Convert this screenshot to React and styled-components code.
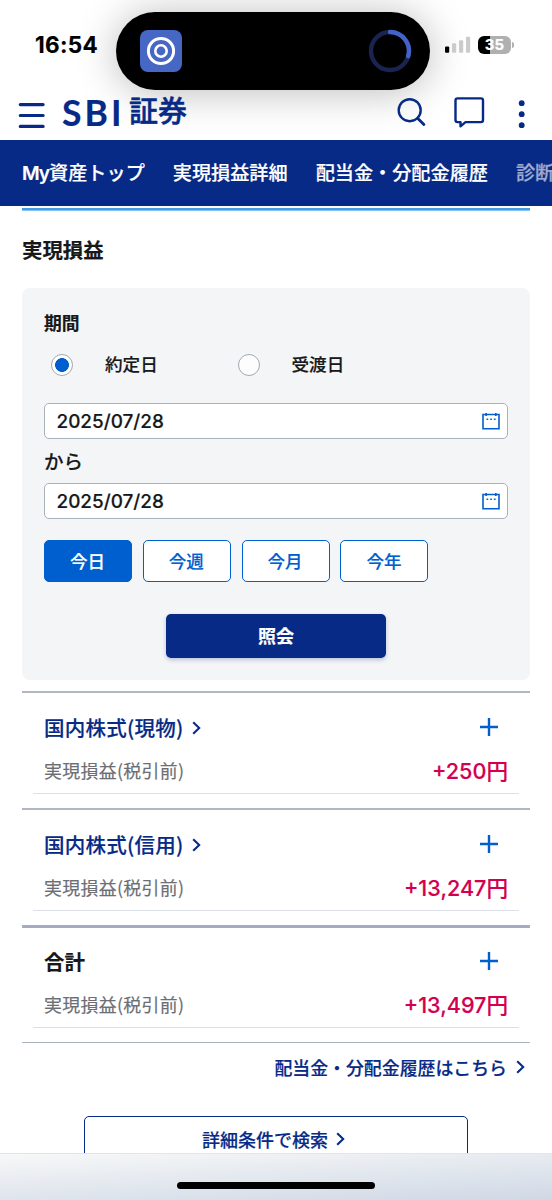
import React, { useState } from "react"
import styled, { createGlobalStyle } from "styled-components"

const GlobalStyle = createGlobalStyle`
  * {
    box-sizing: border-box;
  }
  body {
    margin: 0;
    background: #fff;
    color: #17181a;
    font-family: Inter, "Noto Sans CJK JP", sans-serif;
    -webkit-text-stroke: 0.18px;
  }
  button {
    font-family: inherit;
    padding: 0;
    cursor: pointer;
  }
`

const navy = "#072a86"
const blue = "#005fce"

const Screen = styled.div`
  position: relative;
  width: 552px;
  height: 1200px;
  overflow: hidden;
  background: #fff;
`

const StatusBar = styled.div`
  display: flex;
  align-items: flex-start;
  height: 92px;
  padding-top: 12px;
`

const Clock = styled.div`
  width: 116px;
  padding-left: 35px;
  font-size: 22.5px;
  font-weight: 700;
  letter-spacing: 0.3px;
  line-height: 66px;
  color: #000;
`

const Island = styled.div`
  display: flex;
  align-items: center;
  justify-content: space-between;
  width: 314px;
  height: 78px;
  padding: 0 18px 0 23.5px;
  border-radius: 39px;
  background: #000;
  box-shadow: 0 2px 40px rgba(0, 0, 0, 0.27);
`

const Signal = styled.svg`
  margin: 24px 0 0 15px;
`

const Battery = styled.div`
  position: relative;
  width: 33px;
  height: 18px;
  margin: 24px 0 0 7px;
  border-radius: 6px;
  background: linear-gradient(90deg, #000 36%, #b0b0b0 36%);
  color: #fff;
  font-size: 15px;
  font-weight: 700;
  line-height: 18px;
  text-align: center;

  &::after {
    content: "";
    position: absolute;
    top: 6px;
    right: -3px;
    width: 2px;
    height: 6px;
    border-radius: 0 2px 2px 0;
    background: #b0b0b0;
  }
`

const Header = styled.header`
  display: flex;
  align-items: center;
  height: 48px;
  padding: 0 26px 4px 18px;
`

const MenuIcon = styled.svg`
  margin-top: 3px;
`

const Logo = styled.div`
  display: flex;
  align-items: center;
  flex: 1;
  margin: -4px 0 0 16px;
  color: ${navy};
  line-height: 44px;
`

const LogoLatin = styled.span`
  width: 67px;
  font-family: Lato, sans-serif;
  font-size: 37px;
  font-weight: 700;
  letter-spacing: 3.2px;
  transform: scaleX(0.96);
  transform-origin: left;
  white-space: nowrap;
`

const LogoKanji = styled.span`
  font-size: 29px;
  font-weight: 500;
  -webkit-text-stroke: 0.5px;
`

const HeaderIcons = styled.div`
  display: flex;
  align-items: center;
`

const Nav = styled.nav`
  display: flex;
  align-items: center;
  gap: 28px;
  height: 66px;
  padding: 0 0 2px 22px;
  overflow: hidden;
  background: ${navy};
`

const NavItem = styled.a`
  flex: none;
  color: #fff;
  opacity: ${(props) => (props.$faded ? 0.6 : 1)};
  font-size: 19.15px;
  font-weight: 500;
  white-space: nowrap;

  b {
    font-weight: 600;
    letter-spacing: -1px;
  }
`

const Main = styled.main`
  padding: 2px 22px 0;
`

const TopLine = styled.div`
  height: 3px;
  background: linear-gradient(#4b9be0 66%, #7fc4f4 66%);
`

const Title = styled.h1`
  margin: 0;
  height: 77px;
  font-size: 20.4px;
  font-weight: 700;
  line-height: 80px;
`

const Panel = styled.section`
  height: 392px;
  padding: 22px;
  border-radius: 8px;
  background: #f4f5f7;
`

const Label = styled.div`
  height: 28px;
  font-size: 17.8px;
  font-weight: 700;
  line-height: 28px;
`

const RadioRow = styled.div`
  display: flex;
  height: 65px;
  padding: 0 0 11px 7px;
`

const RadioLabel = styled.label`
  display: flex;
  align-items: center;
  gap: 32px;
  width: 186.5px;
  font-size: 17.6px;
  font-weight: 500;

  span {
    margin-top: -3px;
  }
`

const Radio = styled.input`
  appearance: none;
  width: 22px;
  height: 22px;
  margin: 0;
  border: 1px solid #a3a8b4;
  border-radius: 50%;
  background: #fdfdfd;

  &:checked {
    background: radial-gradient(circle, ${blue} 6.6px, #fff 7.2px);
  }
`

const DateField = styled.div`
  display: flex;
  align-items: center;
  justify-content: space-between;
  height: 36px;
  padding: 0 7px 0 11.5px;
  border: 1.5px solid #a9b0be;
  border-radius: 5px;
  background: #fff;
  font-size: 18.9px;
  font-weight: 500;
`

const From = styled.div`
  height: 44px;
  font-size: 19.5px;
  font-weight: 500;
  line-height: 46px;
`

const Ranges = styled.div`
  display: flex;
  gap: 10.8px;
  margin-top: 21px;
`

const RangeButton = styled.button`
  width: 88px;
  height: 42px;
  padding: 0 1px 2px 0;
  border: 1.5px solid ${blue};
  border-radius: 5px;
  background: ${(props) => (props.$active ? blue : "#fff")};
  color: ${(props) => (props.$active ? "#fff" : blue)};
  font-size: 17.5px;
  font-weight: 500;
`

const SubmitButton = styled.button`
  display: block;
  width: 220px;
  height: 44px;
  margin: 32px auto 0;
  padding-bottom: 2px;
  border: 0;
  border-radius: 5px;
  background: ${navy};
  box-shadow: 0 2px 4px rgba(7, 42, 134, 0.25);
  color: #fff;
  font-size: 18px;
  font-weight: 700;
`

const Results = styled.div`
  margin-top: 11px;
  border-bottom: 1.5px solid #abb1bd;
`

const Block = styled.section`
  height: 117px;
  padding: ${(props) => (props.$total ? 14 : 15)}px 11px 0;
  border-top: ${(props) => (props.$total ? "3px solid #a5acbf" : "2px solid #b2b8c2")};
`

const BlockHead = styled.div`
  display: flex;
  align-items: center;
  justify-content: space-between;
  height: 40px;
  padding: 0 21px 0 11px;
`

const BlockTitle = styled.h2`
  display: flex;
  align-items: center;
  gap: 8.5px;
  margin: -3px 0 0;
  color: ${(props) => (props.$total ? "#17181a" : navy)};
  font-family: "Noto Sans CJK JP", sans-serif;
  font-size: 20.5px;
  font-weight: ${(props) => (props.$total ? 700 : 500)};
  letter-spacing: ${(props) => (props.$total ? 0 : 0.25)}px;

  svg {
    margin-top: 2px;
  }
`

const PlusIcon = styled.svg`
  margin-bottom: 2px;
`

const BlockRow = styled.div`
  display: flex;
  align-items: center;
  justify-content: space-between;
  height: 44px;
  margin-top: 2px;
  padding: 0 11px 3px;
  border-bottom: 1px solid #dcdfe8;
`

const RowLabel = styled.span`
  color: #6b6e74;
  font-family: "Noto Sans CJK JP", sans-serif;
  font-size: 17.9px;
  letter-spacing: 0.35px;
`

const Amount = styled.span`
  margin-top: -2px;
  color: #d4004f;
  font-size: 21.6px;
  font-weight: 500;
`

const HistoryLink = styled.a`
  display: flex;
  align-items: center;
  justify-content: flex-end;
  gap: 9px;
  height: 50px;
  padding: 0 5px 2px 0;
  color: ${navy};
  font-size: 17.9px;
  font-weight: 500;
`

const DetailButton = styled.button`
  display: flex;
  align-items: center;
  justify-content: center;
  gap: 8px;
  width: 384px;
  height: 48px;
  margin: 23px 0 0 62px;
  padding: 0 5px 3px 0;
  border: 1.5px solid ${navy};
  border-radius: 5px;
  background: #fff;
  color: ${navy};
  font-size: 18px;
  font-weight: 500;
`

// lies over the scrolling page
const BottomBar = styled.div`
  position: absolute;
  left: 0;
  right: 0;
  bottom: 0;
  display: flex;
  justify-content: center;
  height: 47px;
  padding-top: 28px;
  border-top: 1px solid #e3e4e6;
  background: linear-gradient(177deg, #f5f6f7 5%, #e3e8ef 50%, #d0d8e5 100%);
`

const HomeIndicator = styled.div`
  width: 198px;
  height: 7px;
  border-radius: 4px;
  background: #000;
`

const Chevron = () => (
  <svg width="9" height="14" viewBox="0 0 9 14" fill="none" stroke={navy} strokeWidth="2.1">
    <path d="M1.2 1.2 7.2 7l-6 5.8" />
  </svg>
)

const Calendar = () => (
  <svg width="18" height="18" viewBox="0 0 18 18" fill="none" stroke={blue} strokeWidth="1.6">
    <path d="M1 2.5h16v14.3H1zM4.2 1v3M13.8 1v3" />
    <path d="M4.5 7.2h1.7M8.2 7.2h1.7M11.9 7.2h1.7" />
  </svg>
)

const navItems = ["実現損益詳細", "配当金・分配金履歴"]
const ranges = ["今日", "今週", "今月", "今年"]
const results = [
  { title: "国内株式(現物)", amount: "+250円" },
  { title: "国内株式(信用)", amount: "+13,247円" },
  { title: "合計", amount: "+13,497円", total: true },
]

export default function App() {
  const [range, setRange] = useState("今日")
  const [dateType, setDateType] = useState("約定日")

  return (
    <Screen>
      <GlobalStyle />
      <StatusBar>
        <Clock>16:54</Clock>
        <Island>
          <svg width="42" height="42" viewBox="0 0 42 42" fill="none">
            <rect width="42" height="42" rx="8" fill="#4767c5" />
            <circle cx="21" cy="21" r="12.6" stroke="#fff" strokeWidth="3" />
            <circle cx="21" cy="21" r="5.7" stroke="#fff" strokeWidth="2.6" />
          </svg>
          <svg width="44" height="44" viewBox="0 0 44 44" fill="none" strokeWidth="4.4">
            <circle cx="22" cy="22" r="19" stroke="#1b2450" />
            <path d="M22 3a19 19 0 0 1 18.2 24.2" stroke="#4363c8" strokeLinecap="round" />
          </svg>
        </Island>
        <Signal width="26" height="18" viewBox="0 0 26 18">
          <rect x="0" y="10.5" width="4.2" height="6.2" rx="1" fill="#000" />
          <g fill="#cbcbcb">
            <rect x="7" y="7.3" width="4.2" height="9.4" rx="1" />
            <rect x="14" y="4.3" width="4.2" height="12.4" rx="1" />
            <rect x="21" y="0.8" width="4.2" height="15.9" rx="1" />
          </g>
        </Signal>
        <Battery>35</Battery>
      </StatusBar>

      <Header>
        <MenuIcon width="28" height="28" viewBox="0 0 28 28" stroke={navy} strokeWidth="3.2" strokeLinecap="round">
          <path d="M2.3 2.6h22.8M2.3 13.5h22.8M2.3 24.4h22.8" />
        </MenuIcon>
        <Logo>
          <LogoLatin>SBI</LogoLatin>
          <LogoKanji>証券</LogoKanji>
        </Logo>
        <HeaderIcons>
          <svg width="130" height="34" viewBox="0 0 130 34" fill="none" stroke={navy} strokeWidth="2.4">
            <circle cx="13.7" cy="13.2" r="11" />
            <path d="m21.6 21.2 6.3 6.4" strokeWidth="2.8" strokeLinecap="round" />
            <path
              d="M61.5 1.4h23.5q2 0 2 2v19.7q0 2-2 2H69.5l-5 4.2v-4.2H61.5q-2 0-2-2v-19.7q0-2 2-2z"
              strokeLinejoin="round"
            />
            <g fill={navy} stroke="none">
              <circle cx="125.7" cy="6.2" r="2.9" />
              <circle cx="125.7" cy="17.2" r="2.9" />
              <circle cx="125.7" cy="28.2" r="2.9" />
            </g>
          </svg>
        </HeaderIcons>
      </Header>

      <Nav>
        <NavItem><b>My</b>資産トップ</NavItem>
        {navItems.map((item) => (
          <NavItem key={item}>{item}</NavItem>
        ))}
        <NavItem $faded>診断</NavItem>
      </Nav>

      <Main>
        <TopLine />
        <Title>実現損益</Title>
        <Panel>
          <Label>期間</Label>
          <RadioRow>
            {["約定日", "受渡日"].map((type) => (
              <RadioLabel key={type}>
                <Radio
                  type="radio"
                  name="dateType"
                  checked={dateType === type}
                  onChange={() => setDateType(type)}
                />
                <span>{type}</span>
              </RadioLabel>
            ))}
          </RadioRow>
          <DateField>2025/07/28<Calendar /></DateField>
          <From>から</From>
          <DateField>2025/07/28<Calendar /></DateField>
          <Ranges>
            {ranges.map((item) => (
              <RangeButton key={item} $active={item === range} onClick={() => setRange(item)}>
                {item}
              </RangeButton>
            ))}
          </Ranges>
          <SubmitButton>照会</SubmitButton>
        </Panel>

        <Results>
          {results.map(({ title, amount, total }) => (
            <Block key={title} $total={total}>
              <BlockHead>
                <BlockTitle $total={total}>
                  {title}
                  {!total && <Chevron />}
                </BlockTitle>
                <PlusIcon width="18" height="18" viewBox="0 0 18 18" stroke={blue} strokeWidth="2.4">
                  <path d="M9 0v18M0 9h18" />
                </PlusIcon>
              </BlockHead>
              <BlockRow>
                <RowLabel>実現損益(税引前)</RowLabel>
                <Amount>{amount}</Amount>
              </BlockRow>
            </Block>
          ))}
        </Results>

        <HistoryLink>配当金・分配金履歴はこちら<Chevron /></HistoryLink>
        <DetailButton>詳細条件で検索<Chevron /></DetailButton>
      </Main>

      <BottomBar>
        <HomeIndicator />
      </BottomBar>
    </Screen>
  )
}
